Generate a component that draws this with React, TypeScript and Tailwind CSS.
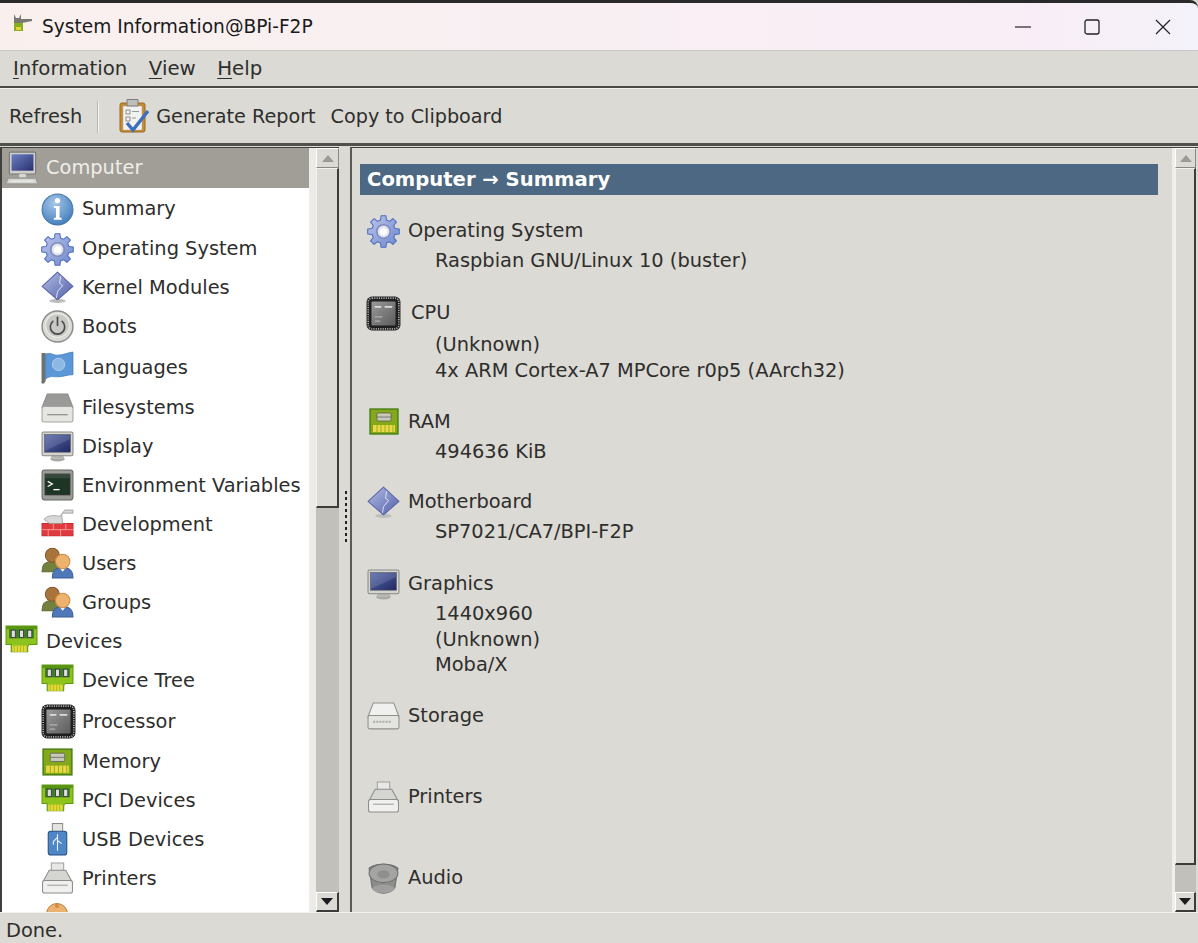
import React from "react";

type IC = { s?: number };

function gearPath(cx: number, cy: number, ro: number, ri: number, n: number) {
  const pts: string[] = [];
  const step = (Math.PI * 2) / n;
  for (let i = 0; i < n; i++) {
    const a = i * step - Math.PI / 2;
    const w = step * 0.2;
    const p = [
      [ri, a - step * 0.32],
      [ro, a - w],
      [ro, a + w],
      [ri, a + step * 0.32],
    ];
    p.forEach(([r, t]) => pts.push(`${(cx + r * Math.cos(t)).toFixed(2)},${(cy + r * Math.sin(t)).toFixed(2)}`));
  }
  return "M" + pts.join("L") + "Z";
}

const Svg = ({ s = 33, children }: IC & { children: React.ReactNode }) => (
  <svg width={s} height={s} viewBox="0 0 32 32" className="shrink-0">
    {children}
  </svg>
);

const Monitor = ({ s }: IC) => (
  <Svg s={s}>
    <defs>
      <linearGradient id="scr" x1="0" y1="0" x2="1" y2="1">
        <stop offset="0" stopColor="#5a6cb0" />
        <stop offset="1" stopColor="#20285f" />
      </linearGradient>
    </defs>
    <ellipse cx="16" cy="28" rx="7" ry="2.5" fill="#a9a9a6" />
    <rect x="10" y="24" width="12" height="4" rx="1.5" fill="#b9b9b5" />
    <rect x="1" y="2" width="30" height="23" rx="1.5" fill="#d4d4d0" stroke="#888885" />
    <rect x="3.5" y="4.5" width="25" height="17" fill="url(#scr)" stroke="#55555a" strokeWidth="0.6" />
    <path d="M4 20 L28 9 V5 H4Z" fill="#fff" opacity="0.12" />
  </Svg>
);

const ComputerIcon = ({ s }: IC) => (
  <Svg s={s}>
    <defs>
      <linearGradient id="scr2" x1="0" y1="0" x2="1" y2="1">
        <stop offset="0" stopColor="#6c80c4" />
        <stop offset="1" stopColor="#28306c" />
      </linearGradient>
    </defs>
    <rect x="4" y="1" width="24" height="20" rx="1" fill="#cfcfcb" stroke="#77777a" />
    <rect x="6" y="3" width="20" height="15" fill="url(#scr2)" />
    <rect x="13" y="21" width="6" height="3" fill="#d8d8d4" />
    <path d="M3 25 H28 L30 30 H1Z" fill="#d4d4d0" stroke="#8f8f8c" strokeWidth="0.7" />
    <path d="M5 27.5 H26" stroke="#f1f1ee" strokeWidth="1" />
  </Svg>
);

const Info = ({ s }: IC) => (
  <Svg s={s}>
    <defs>
      <radialGradient id="inf" cx="0.4" cy="0.3" r="0.8">
        <stop offset="0" stopColor="#a5c6e8" />
        <stop offset="1" stopColor="#3c78b8" />
      </radialGradient>
    </defs>
    <circle cx="16" cy="16" r="15" fill="url(#inf)" stroke="#4476ad" />
    <circle cx="16" cy="7.5" r="2.6" fill="#fff" />
    <path d="M12.5 12.5 H18 V24 H20 V26 H12.5 V24 H14.5 V14.5 H12.5Z" fill="#fff" />
  </Svg>
);

const Gear = ({ s }: IC) => (
  <Svg s={s}>
    <defs>
      <linearGradient id="gr" x1="0" y1="0" x2="1" y2="1">
        <stop offset="0" stopColor="#c0c6ea" />
        <stop offset="1" stopColor="#6c86cc" />
      </linearGradient>
    </defs>
    <path d={gearPath(16, 16, 15.5, 11.5, 8)} fill="url(#gr)" stroke="#4a6ec0" strokeWidth="1" strokeLinejoin="round" />
    <circle cx="16" cy="16" r="6.5" fill="#e2e4ee" stroke="#7f8dc0" strokeWidth="1.6" />
    <circle cx="16" cy="16" r="3.5" fill="#fff" />
  </Svg>
);

const Diamond = ({ s }: IC) => (
  <Svg s={s}>
    <defs>
      <linearGradient id="dm" x1="0" y1="0" x2="1" y2="1">
        <stop offset="0" stopColor="#b4bce4" />
        <stop offset="1" stopColor="#5160a8" />
      </linearGradient>
    </defs>
    <ellipse cx="16" cy="29" rx="8" ry="2" fill="#bdbdbb" />
    <path d="M16 1 L31 15 L16 28 L1 15Z" fill="url(#dm)" stroke="#5a66a6" strokeLinejoin="round" />
    <path d="M19 5 L18 12 L21 14 L16 20 L15 26" fill="none" stroke="#e4e8f8" strokeWidth="0.9" />
  </Svg>
);

const Power = ({ s }: IC) => (
  <Svg s={s}>
    <circle cx="16" cy="16" r="15" fill="#d9d9d6" stroke="#8b8b88" strokeWidth="1.4" />
    <circle cx="16" cy="15" r="11.5" fill="#c8c8c5" stroke="#ecece9" />
    <path d="M11.5 11 A7 7 0 1 0 20.5 11" fill="none" stroke="#4b4b4b" strokeWidth="1.6" strokeLinecap="round" />
    <path d="M16 7 V15" stroke="#4b4b4b" strokeWidth="1.6" strokeLinecap="round" />
  </Svg>
);

const Flag = ({ s }: IC) => (
  <Svg s={s}>
    <path d="M0.5 2 H4.5 V29 L3 31.5 H0.5Z" fill="#6f7272" />
    <path d="M4.5 3 C9 1 11 4 16 4 C22 4 26 1.5 31 1 V23 C25 23 22 25 16 25 C11 25 9 24 4.5 27Z" fill="#5c97d8" stroke="#3f76b4" strokeWidth="0.7" />
    <circle cx="17" cy="13" r="6" fill="#8db8e4" stroke="#bcd5ef" strokeWidth="0.8" />
  </Svg>
);

const Drive = ({ s }: IC) => (
  <Svg s={s}>
    <path d="M6 2 H26 L31 15 H1Z" fill="#9a9a98" stroke="#8c8c8a" strokeLinejoin="round" />
    <rect x="1" y="14" width="30" height="15" rx="2" fill="#e5e5e2" stroke="#a3a3a0" />
    <path d="M6 22 H26" stroke="#8e8e8c" strokeWidth="1.2" />
  </Svg>
);

const Terminal = ({ s }: IC) => (
  <Svg s={s}>
    <rect x="1" y="1" width="30" height="29" rx="2.5" fill="#9a9c98" stroke="#666864" />
    <rect x="4" y="5" width="24" height="20" fill="#1d3525" stroke="#2d2d2d" />
    <path d="M6.5 12 L11 14.5 L6.5 17" fill="none" stroke="#fff" strokeWidth="1.2" />
    <path d="M12 20 H18" stroke="#fff" strokeWidth="1.3" />
    <path d="M4 5 H28 V9 H4Z" fill="#fff" opacity="0.1" />
  </Svg>
);

const Dev = ({ s }: IC) => (
  <Svg s={s}>
    <path d="M1 15 H31 V27 H1Z" fill="#e03a3e" stroke="#c92a2e" />
    <path d="M1 21 H31 M12 15 V21 M24 15 V21 M7 21 V27 M19 21 V27" stroke="#ffa8a8" strokeWidth="0.8" />
    <path d="M3 11 C6 7 12 7 18 8 L21 5 H31 V2 H23 L20 6 L21 15 H8Z" fill="#d8d8d6" stroke="#909090" strokeWidth="0.7" />
  </Svg>
);

const Users = ({ s }: IC) => (
  <Svg s={s}>
    <path d="M1 24 C1 17 5 14 10 14 C16 14 19 17 19 24Z" fill="#73813f" stroke="#5e6a32" />
    <circle cx="11" cy="8" r="6.8" fill="#a9743c" stroke="#855a2a" />
    <path d="M11 30 C11 22 15 20 21 20 C27 20 31 22 31 30Z" fill="#4f78b8" stroke="#3b5f98" />
    <path d="M18 20 L21 24 L24 20Z" fill="#fff" />
    <circle cx="21" cy="14" r="7" fill="#eeb26f" stroke="#cc8c48" />
  </Svg>
);

const Board = ({ s }: IC) => (
  <Svg s={s}>
    <path d="M1 1 H31 V19 H24 C22 19 22 20 22 22 V26 H6 V19 H1Z" fill="#8ec21c" stroke="#5d9a10" />
    <rect x="1" y="1" width="30" height="3" fill="#5a9610" />
    <rect x="4" y="4" width="24" height="9" fill="#3c7f25" />
    {[6, 14, 22].map((x) => (
      <rect key={x} x={x} y="5" width="4" height="7" fill="#dedede" stroke="#333" strokeWidth="0.8" />
    ))}
    <rect x="7" y="20" width="14" height="6" fill="#e9d53a" />
    {[9, 12, 15, 18].map((x) => (
      <path key={x} d={`M${x} 20 V26`} stroke="#8ec21c" strokeWidth="0.8" />
    ))}
  </Svg>
);

const Chip = ({ s }: IC) => (
  <Svg s={s}>
    <defs>
      <linearGradient id="cg" x1="0" y1="0" x2="1" y2="1">
        <stop offset="0" stopColor="#9a9a9a" />
        <stop offset="1" stopColor="#5c5c5c" />
      </linearGradient>
    </defs>
    <rect x="0.5" y="0.5" width="31" height="31" rx="5" fill="#1f1f1f" />
    <rect x="2" y="2" width="28" height="28" rx="3.5" fill="none" stroke="#b0b0b0" strokeWidth="1.5" strokeDasharray="1 1.1" />
    <rect x="5" y="5" width="22" height="22" rx="1" fill="url(#cg)" />
    <path d="M8 10 H14 M17 10 H24" stroke="#dcdcdc" strokeWidth="1.5" />
    <path d="M8 19 H15 M8 23 H13" stroke="#b0b0b0" strokeWidth="1.2" />
  </Svg>
);

const Memory = ({ s }: IC) => (
  <Svg s={s}>
    <rect x="2" y="3" width="28" height="25" fill="#83a81a" stroke="#3f7a10" strokeWidth="1.3" />
    <rect x="9" y="7" width="14" height="8" rx="1" fill="#c9c9b8" stroke="#555" strokeWidth="0.7" />
    <path d="M9 11 H23" stroke="#666" strokeWidth="0.8" />
    <rect x="5" y="19" width="22" height="7" fill="#ecd845" />
    {[9, 13, 17, 21, 25].map((x) => (
      <path key={x} d={`M${x} 19 V26`} stroke="#83a81a" strokeWidth="0.8" />
    ))}
  </Svg>
);

const Usb = ({ s }: IC) => (
  <Svg s={s}>
    <rect x="11" y="0.5" width="10" height="9" fill="#e4e4e0" stroke="#8a8a86" />
    <rect x="7" y="8" width="18" height="23" rx="2.5" fill="#4f86c6" stroke="#264f84" />
    <path d="M16 11 V27 M16 14 L12 18 V21 M16 17 L20 20" stroke="#e8f0fa" strokeWidth="1.1" fill="none" />
  </Svg>
);

const Printer = ({ s }: IC) => (
  <Svg s={s}>
    <path d="M10 1 H22 V10 H10Z" fill="#e8e8e6" stroke="#a0a09e" />
    <path d="M8 8 H24 L30 19 H2Z" fill="#d5d5d2" stroke="#8c8c8a" strokeLinejoin="round" />
    <rect x="1.5" y="18" width="29" height="12" rx="2" fill="#f0f0ee" stroke="#8c8c8a" />
    <path d="M6 22.5 H26" stroke="#9d9d9b" strokeWidth="1" />
  </Svg>
);

const Storage = ({ s }: IC) => (
  <Svg s={s}>
    <path d="M6 3 H26 L31 16 H1Z" fill="#f0f0ee" stroke="#8f8f8d" strokeLinejoin="round" />
    <rect x="1" y="15" width="30" height="13" rx="1.5" fill="#e4e4e1" stroke="#8f8f8d" />
    <path d="M6 21 H24" stroke="#aaaaa6" strokeWidth="2" strokeDasharray="2 1" />
  </Svg>
);

const Audio = ({ s }: IC) => (
  <Svg s={s}>
    <path d="M2 6 C8 1 24 1 30 6 L27 25 C22 32 10 32 5 25Z" fill="#8c8c8a" stroke="#6c6c6a" />
    <ellipse cx="16" cy="11" rx="14" ry="9" fill="#a4a4a2" stroke="#70706e" />
    <ellipse cx="16" cy="12" rx="6" ry="4" fill="#8f8f8d" />
    <ellipse cx="16" cy="26" rx="11" ry="4" fill="#9f9f9d" />
  </Svg>
);

const Person = () => (
  <svg width="26" height="10" viewBox="0 0 26 10" className="shrink-0">
    <circle cx="13" cy="11" r="10.5" fill="#eeb26f" stroke="#b8803c" />
    <circle cx="13" cy="3" r="2" fill="#cc8c48" />
  </svg>
);

const ClipIcon = () => (
  <svg width="32" height="36" viewBox="0 0 32 36" className="shrink-0 -mt-[2px]">
    <rect x="2" y="5" width="25" height="29" rx="2" fill="#c88a2e" stroke="#9b6a20" />
    <rect x="5" y="8" width="19" height="24" fill="#f2f2f0" stroke="#a8a8a6" strokeWidth="0.5" />
    <path d="M9 1.5 H20 V8 H9Z" fill="#bdbdb9" stroke="#7c7c78" />
    <rect x="8" y="12" width="4" height="4" fill="none" stroke="#777" strokeWidth="0.8" />
    <rect x="8" y="19" width="4" height="4" fill="none" stroke="#777" strokeWidth="0.8" />
    <path d="M14 13.5 H21 M14 20 H18" stroke="#999" strokeWidth="1" />
    <path d="M9 25 L15 32 L30 13" fill="none" stroke="#3c6fc0" strokeWidth="3.4" />
  </svg>
);

const TitleIcon = () => (
  <svg width="22" height="20" viewBox="0 0 22 20" className="shrink-0">
    <path d="M3 0 L5 4 H8 L10 0 V5 H21 V7 L11 9 V14 H3Z" fill="#787870" />
    <rect x="3" y="9" width="9" height="8" fill="#88b01c" />
    <rect x="5" y="13" width="5" height="3" fill="#e6d43a" />
  </svg>
);

const Up = ({ dim }: { dim?: boolean }) => (
  <svg width="12" height="7" viewBox="0 0 12 7">
    <path d="M6 0 L12 7 H0Z" fill={dim ? "#9a9a96" : "#222"} />
  </svg>
);
const Down = () => (
  <svg width="12" height="7" viewBox="0 0 12 7">
    <path d="M0 0 H12 L6 7Z" fill="#1c1c1c" />
  </svg>
);

const Scrollbar = ({ thumbH, w }: { thumbH: string; w: string }) => (
  <div className={`flex flex-col ${w} shrink-0 h-full bg-[#c2c0ba]`}>
    <div className="h-[20px] shrink-0 flex items-center justify-center bg-[#dcdad5] border border-t-white border-l-white border-r-[#8a8883] border-b-[#8a8883]">
      <Up dim />
    </div>
    <div className={`${thumbH} shrink-0 bg-[#dcdad5] border-l border-t border-l-[#f4f3f0] border-t-[#f4f3f0] border-r-2 border-b-2 border-r-[#3c3c3a] border-b-[#3c3c3a]`} />
    <div className="flex-1" />
    <div className="h-[20px] shrink-0 flex items-center justify-center bg-[#dcdad5] border-l border-t border-l-white border-t-white border-r-2 border-b-2 border-r-[#3c3c3a] border-b-[#3c3c3a]">
      <Down />
    </div>
  </div>
);

const tree: { label: string; icon: React.ReactNode; h: string; top?: boolean; sel?: boolean }[] = [
  { label: "Computer", icon: <ComputerIcon s={35} />, h: "h-[40px]", top: true, sel: true },
  { label: "Summary", icon: <Info />, h: "h-[42px]" },
  { label: "Operating System", icon: <Gear />, h: "h-[38px]" },
  { label: "Kernel Modules", icon: <Diamond />, h: "h-[39px]" },
  { label: "Boots", icon: <Power />, h: "h-[39px]" },
  { label: "Languages", icon: <Flag />, h: "h-[43px]" },
  { label: "Filesystems", icon: <Drive />, h: "h-[38px]" },
  { label: "Display", icon: <Monitor />, h: "h-[39px]" },
  { label: "Environment Variables", icon: <Terminal />, h: "h-[39px]" },
  { label: "Development", icon: <Dev />, h: "h-[39px]" },
  { label: "Users", icon: <Users />, h: "h-[39px]" },
  { label: "Groups", icon: <Users />, h: "h-[39px]" },
  { label: "Devices", icon: <Board />, h: "h-[39px]", top: true },
  { label: "Device Tree", icon: <Board />, h: "h-[39px]" },
  { label: "Processor", icon: <Chip s={35} />, h: "h-[43px]" },
  { label: "Memory", icon: <Memory />, h: "h-[38px]" },
  { label: "PCI Devices", icon: <Board />, h: "h-[39px]" },
  { label: "USB Devices", icon: <Usb />, h: "h-[39px]" },
  { label: "Printers", icon: <Printer />, h: "h-[39px]" },
];

const sections: { title: string; icon: React.ReactNode; values: string[]; h: string; cpu?: boolean }[] = [
  { title: "Operating System", icon: <Gear />, values: ["Raspbian GNU/Linux 10 (buster)"], h: "h-[82px]" },
  { title: "CPU", icon: <Chip s={35} />, values: ["(Unknown)", "4x ARM Cortex-A7 MPCore r0p5 (AArch32)"], h: "h-[109px]", cpu: true },
  { title: "RAM", icon: <Memory s={32} />, values: ["494636 KiB"], h: "h-[80px]" },
  { title: "Motherboard", icon: <Diamond s={33} />, values: ["SP7021/CA7/BPI-F2P"], h: "h-[82px]" },
  { title: "Graphics", icon: <Monitor s={33} />, values: ["1440x960", "(Unknown)", "Moba/X"], h: "h-[132px]" },
  { title: "Storage", icon: <Storage s={33} />, values: [], h: "h-[81px]" },
  { title: "Printers", icon: <Printer s={33} />, values: [], h: "h-[81px]" },
  { title: "Audio", icon: <Audio s={33} />, values: [], h: "h-[40px]" },
];

export default function App() {
  return (
    <div className="w-[1198px] h-[943px] overflow-hidden bg-[#dcdad5] flex flex-col font-['DejaVu_Sans',sans-serif] text-[19.4px] leading-[26px] text-[#2e2e2c]">
      {/* Title bar */}
      <div className="h-[50px] shrink-0 flex items-center border-t-[3px] border-[#2a2a2a] bg-[linear-gradient(90deg,#f9f0ee,#f8eff3_50%,#f9edf6_85%,#f4f2fa)] rounded-tr-[8px]">
        <div className="pl-[11px] w-[42px] -mt-[6px]">
          <TitleIcon />
        </div>
        <span className="text-[#1a1a1a] text-[18.6px]">System Information@BPi-F2P</span>
        <div className="ml-auto flex items-center text-[#111]">
          <svg width="16" height="2" viewBox="0 0 16 2" className="mr-[53px]">
            <path d="M0 1 H16" stroke="#222" strokeWidth="1.2" />
          </svg>
          <svg width="16" height="16" viewBox="0 0 16 16" className="mr-[55px]">
            <rect x="1" y="1" width="14" height="14" rx="2" fill="none" stroke="#222" strokeWidth="1.3" />
          </svg>
          <svg width="16" height="16" viewBox="0 0 16 16" className="mr-[27px]">
            <path d="M1 1 L15 15 M15 1 L1 15" stroke="#222" strokeWidth="1.2" />
          </svg>
        </div>
      </div>

      {/* Menu bar */}
      <div className="h-[38px] shrink-0 flex items-center pl-[13px] gap-[21.5px] text-[19.75px] border-b-2 border-b-[#4a4a47] border-t border-t-[#c9c7c2]">
        <span>
          <span className="underline underline-offset-[3px]">I</span>nformation
        </span>
        <span>
          <span className="underline underline-offset-[3px]">V</span>iew
        </span>
        <span>
          <span className="underline underline-offset-[3px]">H</span>elp
        </span>
      </div>

      {/* Toolbar */}
      <div className="h-[58px] shrink-0 flex items-center pl-[9px] pt-[2px] text-[19.2px] border-t border-t-[#f2f1ee] border-b-[3px] border-b-[#4f4f4b]">
        <span className="text-[19.4px]">Refresh</span>
        <div className="w-[2px] h-[32px] bg-[#b9b7b2] border-r border-r-[#f6f5f2] ml-[15px] mr-[19px]" />
        <ClipIcon />
        <span className="ml-[6px]">Generate Report</span>
        <span className="ml-[15px]">Copy to Clipboard</span>
      </div>

      {/* Main */}
      <div className="flex-1 min-h-0 flex pt-[1px]">
        {/* Left tree */}
        <div className="w-[339px] shrink-0 flex h-full border-t border-t-[#3f3f3c]">
          <div className="w-[309px] shrink-0 bg-white border-l-2 border-l-[#3f3f3c] overflow-hidden h-full">
            {tree.map((r) => (
              <div
                key={r.label}
                className={`${r.h} flex items-center ${r.top ? "pl-[3px]" : "pl-[39px]"} ${r.sel ? "bg-[#a19e98] text-[#efeee9]" : ""}`}
              >
                <div className="w-[41px] shrink-0 flex">{r.icon}</div>
                <span className="whitespace-nowrap">{r.label}</span>
              </div>
            ))}
            <div className="pl-[42px] pt-[5px]">
              <Person />
            </div>
          </div>
          <div className="w-[7px] shrink-0 bg-[#ecebe7]" />
          <Scrollbar w="w-[23px]" thumbH="h-[340px]" />
        </div>

        {/* Handle */}
        <div className="w-[11px] shrink-0 flex items-center justify-center">
          <div className="flex flex-col gap-[3px] -mt-[26px] ml-[3px]">
            {Array.from({ length: 9 }).map((_, i) => (
              <div key={i} className="w-[2px] h-[3px] bg-[#222]" />
            ))}
          </div>
        </div>

        {/* Right */}
        <div className="flex-1 min-w-0 flex h-full border-l-2 border-l-[#5a5a56] border-t border-t-[#3f3f3c]">
          <div className="flex-1 min-w-0 pl-[8px] pt-[16px] overflow-hidden h-full">
            <div className="h-[31px] w-[798px] bg-[#4c6882] flex items-center pl-[7px] font-bold text-white text-[19.6px]">
              Computer → Summary
            </div>
            <div className="pt-[19px] pl-[7px]">
              {sections.map((sec) => (
                <div key={sec.title} className={sec.h}>
                  <div className="h-[34px] flex items-center">
                    <div className="w-[33px] shrink-0 flex justify-center">{sec.icon}</div>
                    <span className={sec.cpu ? "ml-[11px]" : "ml-[8px]"}>{sec.title}</span>
                  </div>
                  <div className={`pl-[68px] ${sec.cpu ? "pt-[2px]" : "mt-0"}`}>
                    {sec.values.map((v) => (
                      <div key={v} className="whitespace-nowrap leading-[25.5px]">
                        {v}
                      </div>
                    ))}
                  </div>
                </div>
              ))}
            </div>
          </div>
          <div className="w-[3px] shrink-0 bg-[#f0efec]" />
          <Scrollbar w="w-[21px]" thumbH="h-[697px]" />
          <div className="w-[2px] shrink-0" />
        </div>
      </div>

      {/* Status */}
      <div className="h-[31px] shrink-0 flex items-center pl-[6px] pt-[6px] border-t border-t-[#f2f1ee]">Done.</div>
    </div>
  );
}
